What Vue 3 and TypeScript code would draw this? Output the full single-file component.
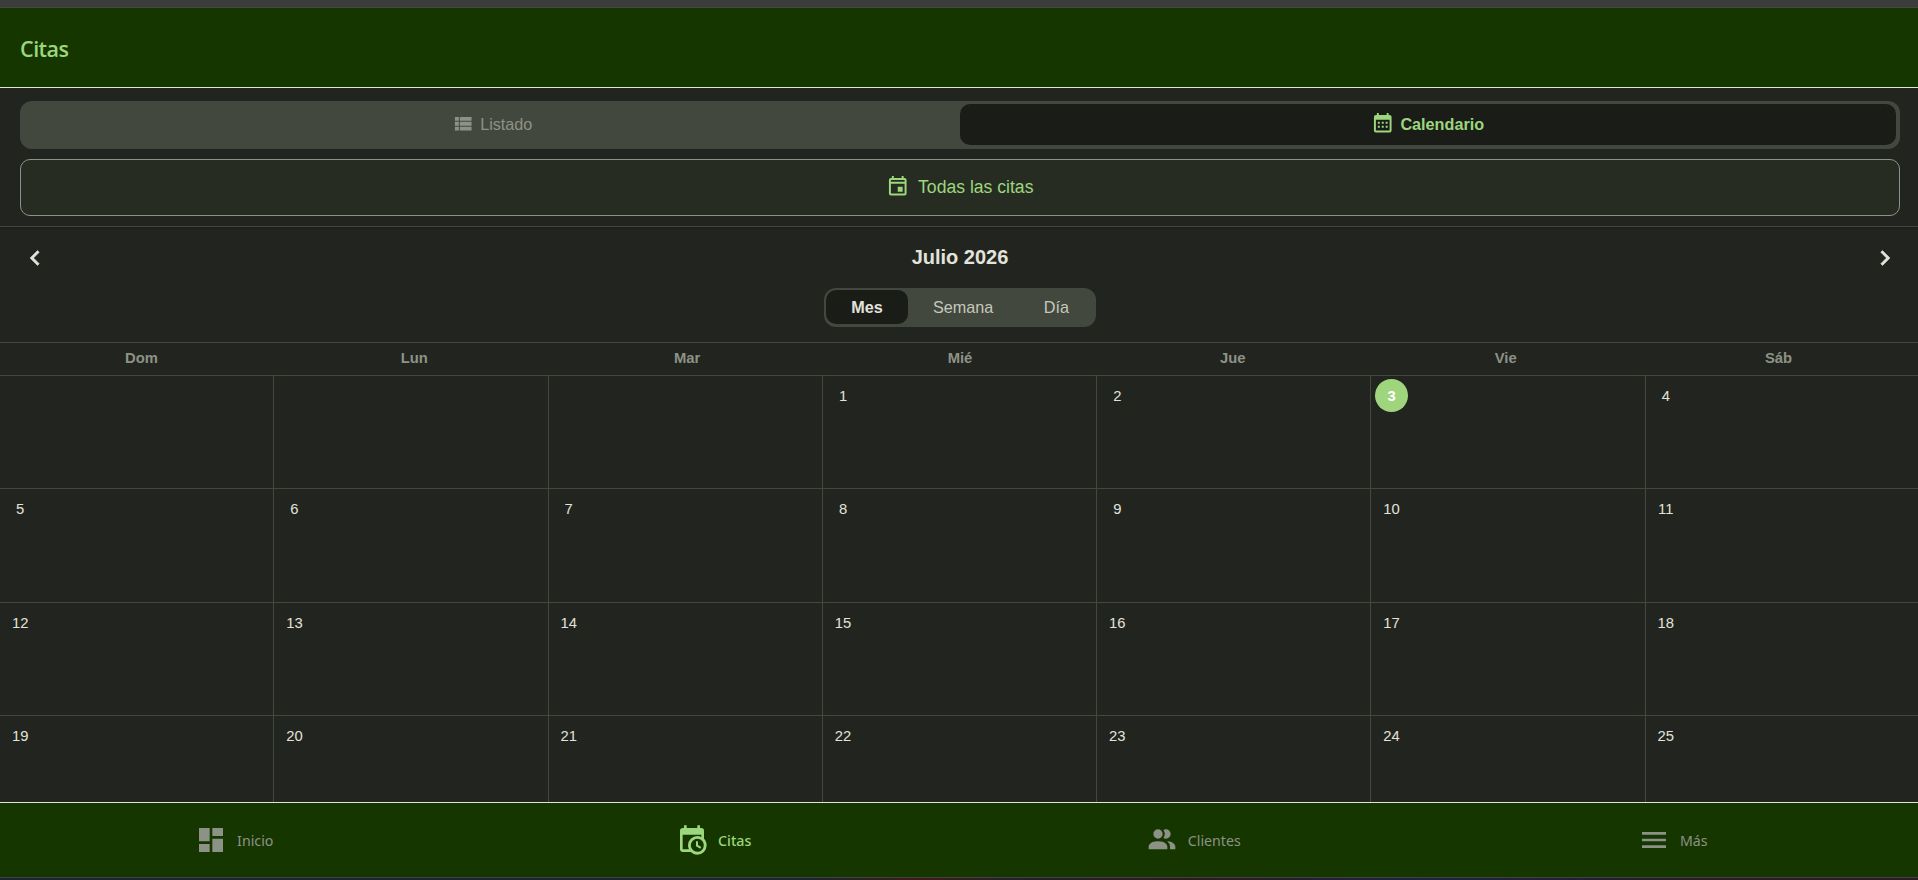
<script setup lang="ts">
interface NavItem {
  label: string
  icon: string
  active?: boolean
}

const weekdays: string[] = ['Dom', 'Lun', 'Mar', 'Mié', 'Jue', 'Vie', 'Sáb']
const leadingBlanks = 3
const today = 3

const weeks: (number | null)[][] = Array.from({ length: 4 }, (_, w) =>
  Array.from({ length: 7 }, (_, d) => {
    const day = w * 7 + d - leadingBlanks + 1
    return day > 0 ? day : null
  }),
)

const navItems: NavItem[] = [
  { label: 'Inicio', icon: 'M13,3V9H21V3M13,21H21V11H13M3,21H11V15H3M3,13H11V3H3V13Z' },
  {
    label: 'Citas',
    active: true,
    icon: 'M15,13H16.5V15.82L18.94,17.23L18.19,18.53L15,16.69V13M19,8H5V19H9.67C9.24,18.09 9,17.07 9,16A7,7 0 0,1 16,9C17.07,9 18.09,9.24 19,9.67V8M5,21C3.89,21 3,20.1 3,19V5C3,3.89 3.89,3 5,3H6V1H8V3H16V1H18V3H19A2,2 0 0,1 21,5V11.1C22.24,12.36 23,14.09 23,16A7,7 0 0,1 16,23C14.09,23 12.36,22.24 11.1,21H5M16,11.15A4.85,4.85 0 0,0 11.15,16C11.15,18.68 13.32,20.85 16,20.85A4.85,4.85 0 0,0 20.85,16C20.85,13.32 18.68,11.15 16,11.15Z',
  },
  {
    label: 'Clientes',
    icon: 'M16 17V19H2V17S2 13 9 13 16 17 16 17M12.5 7.5A3.5 3.5 0 1 0 9 11A3.5 3.5 0 0 0 12.5 7.5M15.94 13A5.32 5.32 0 0 1 18 17V19H22V17S22 13.37 15.94 13M15 4A3.39 3.39 0 0 0 13.07 4.59A5 5 0 0 1 13.07 10.41A3.39 3.39 0 0 0 15 11A3.5 3.5 0 0 0 15 4Z',
  },
  { label: 'Más', icon: 'M3,6H21V8H3V6M3,11H21V13H3V11M3,16H21V18H3V16Z' },
]
</script>

<template>
  <div class="screen">
    <div class="window-edge"></div>
    <header class="header"><h1>Citas</h1></header>

    <section class="toolbar">
      <div class="tabs">
        <button class="tab">
          <svg viewBox="0 0 24 24"><path d="M9,5V9H21V5M9,19H21V15H9M9,14H21V10H9M4,9H8V5H4M4,19H8V15H4M4,14H8V10H4Z" /></svg>
          <span>Listado</span>
        </button>
        <button class="tab tab-active">
          <svg viewBox="0 0 24 24"><path d="M9,10V12H7V10H9M13,10V12H11V10H13M17,10V12H15V10H17M19,3A2,2 0 0,1 21,5V19A2,2 0 0,1 19,21H5C3.89,21 3,20.1 3,19V5A2,2 0 0,1 5,3H6V1H8V3H16V1H18V3H19M19,19V8H5V19H19M9,14V16H7V14H9M13,14V16H11V14H13M17,14V16H15V14H17Z" /></svg>
          <span>Calendario</span>
        </button>
      </div>
      <button class="filter">
        <svg viewBox="0 0 24 24"><path d="M12 12H17V17H12V12M19 3H18V1H16V3H8V1H6V3H5C3.9 3 3 3.9 3 5V19C3 20.1 3.9 21 5 21H19C20.1 21 21 20.1 21 19V5C21 3.9 20.1 3 19 3M19 5V7H5V5H19M5 19V9H19V19H5Z" /></svg>
        <span>Todas las citas</span>
      </button>
    </section>

    <section class="period">
      <div class="month-row">
        <svg viewBox="0 0 24 24"><path d="M15.41,16.58L10.83,12L15.41,7.41L14,6L8,12L14,18L15.41,16.58Z" /></svg>
        <h2>Julio 2026</h2>
        <svg viewBox="0 0 24 24"><path d="M8.59,16.58L13.17,12L8.59,7.41L10,6L16,12L10,18L8.59,16.58Z" /></svg>
      </div>
      <div class="modes">
        <button class="mode mode-active">Mes</button>
        <button class="mode">Semana</button>
        <button class="mode">Día</button>
      </div>
    </section>

    <div class="weekdays">
      <span v-for="name in weekdays" :key="name">{{ name }}</span>
    </div>

    <main class="calendar">
      <div v-for="(week, w) in weeks" :key="w" class="week">
        <div v-for="(day, d) in week" :key="d" class="cell">
          <span v-if="day" class="day" :class="{ today: day === today }">{{ day }}</span>
        </div>
      </div>
    </main>

    <nav class="nav">
      <a v-for="item in navItems" :key="item.label" class="nav-item" :class="{ 'nav-active': item.active }">
        <svg viewBox="0 0 24 24"><path :d="item.icon" /></svg>
        <span>{{ item.label }}</span>
      </a>
    </nav>
    <div class="window-base"></div>
  </div>
</template>

<style>
body {
  margin: 0;
  overflow: hidden;
  background: #22251f;
}
</style>

<style scoped>
.screen {
  display: flex;
  flex-direction: column;
  height: 880px;
  overflow: hidden;
  background: #22251f;
  color: #e3e3dc;
  font-family: "Liberation Sans", Arial, sans-serif;
}
.screen * {
  box-sizing: border-box;
}
svg {
  display: block;
  flex: none;
  fill: currentColor;
}
button {
  padding: 0;
  border: 0;
  background: none;
  color: inherit;
  font: inherit;
}
.window-edge {
  flex: none;
  height: 8px;
  background: #3c3c3c;
  border-bottom: 1px solid #474846;
}
.header {
  flex: none;
  display: flex;
  align-items: center;
  height: 80px;
  padding: 2px 20px 0;
  background: #163600;
  border-bottom: 1px solid #dde8d3;
}
h1 {
  margin: 0;
  color: #9cd67d;
  font: 600 21.5px/30px "Open Sans", "Noto Sans", sans-serif;
  letter-spacing: -0.5px;
}
.toolbar {
  flex: none;
  display: flex;
  flex-direction: column;
  gap: 10px;
  height: 139px;
  padding: 13px 18px 0 20px;
  border-bottom: 1px solid #43483e;
  box-shadow: 0 1px 2px rgba(0, 0, 0, 0.3);
  clip-path: inset(0 0 -4px 0);
}
.tabs {
  display: flex;
  height: 48px;
  padding: 3px 4px 4px;
  border-radius: 12px;
  background: #43483e;
}
.tab {
  flex: 1;
  display: flex;
  align-items: center;
  justify-content: center;
  gap: 6px;
  border-radius: 10px;
  color: #8d9286;
  font-size: 16.2px;
}
.tab span {
  margin-right: 1px;
}
.tab svg,
.filter svg {
  width: 23.5px;
  height: 23.5px;
  margin-bottom: 2px;
}
.tab-active {
  background: #1a1c18;
  color: #9cd67d;
  font-weight: 700;
}
.filter {
  display: flex;
  align-items: center;
  justify-content: center;
  gap: 9px;
  height: 57px;
  padding-right: 1px;
  border: 1px solid #8d9286;
  border-radius: 10px;
  background: #272c23;
  color: #9cd67d;
  font-size: 17.6px;
}
.period {
  flex: none;
  display: flex;
  flex-direction: column;
  align-items: center;
  height: 116px;
  padding-top: 15px;
  border-bottom: 1px solid #43483e;
}
.month-row {
  display: flex;
  align-items: center;
  justify-content: space-between;
  align-self: stretch;
  height: 30px;
  padding: 0 18px 0 20px;
}
.month-row svg {
  width: 30px;
  height: 30px;
  margin-top: 1px;
  stroke: currentColor;
  stroke-width: 0.4;
}
h2 {
  margin: 0;
  font-size: 20px;
  line-height: 30px;
}
.modes {
  display: flex;
  width: 272px;
  height: 39px;
  margin: 16px 0 0 2px;
  padding: 2px 2px 3px;
  border-radius: 12px;
  background: #43483e;
}
.mode {
  padding: 1px 25.2px 0;
  border-radius: 10px;
  color: #c3c8bb;
  font-size: 16.2px;
}
.mode-active {
  background: #1a1c18;
  color: #e3e3dc;
  font-weight: 700;
}
.weekdays {
  flex: none;
  display: grid;
  grid-template-columns: repeat(7, 1fr);
  align-items: center;
  height: 33px;
  padding: 0 3px 2px 5px;
  border-bottom: 1px solid #43483e;
  color: #8d9286;
  font-size: 14.8px;
  font-weight: 700;
  text-align: center;
}
.calendar {
  flex: 1;
  min-height: 0;
  overflow: hidden;
}
.week {
  display: flex;
  height: 113.33px;
}
.cell {
  flex: none;
  width: 14.3%;
  padding: 3.4px 4px;
  border-right: 1px solid #43483e;
  border-bottom: 1px solid #43483e;
}
.day {
  display: flex;
  align-items: center;
  justify-content: center;
  width: 33px;
  height: 33px;
  padding-right: 0.6px;
  border-radius: 50%;
  font-size: 14.8px;
}
.today {
  background: #9fd67d;
  color: #fff;
  font-weight: 700;
}
.nav {
  flex: none;
  display: grid;
  grid-template-columns: repeat(4, 1fr);
  height: 75px;
  background: #163600;
  border-top: 1px solid #e0e3d9;
}
.nav-item {
  display: flex;
  align-items: center;
  justify-content: center;
  gap: 10px;
  padding-right: 11px;
  color: #8d9286;
  font: 400 14.2px/20px "Noto Sans", "Open Sans", sans-serif;
}
.nav-item span {
  margin-top: 1px;
}
.nav-item svg {
  width: 32px;
  height: 32px;
}
.nav-active {
  color: #9cd67d;
  font-weight: 500;
}
.window-base {
  flex: none;
  height: 3px;
  border-top: 1px solid #3e4340;
  background: linear-gradient(90deg, #1b2430 0 42%, #3d1c16 48%, #24202c 53%, #301820 62%, #1b2440 74%, #2c1a26 90%);
}
</style>
